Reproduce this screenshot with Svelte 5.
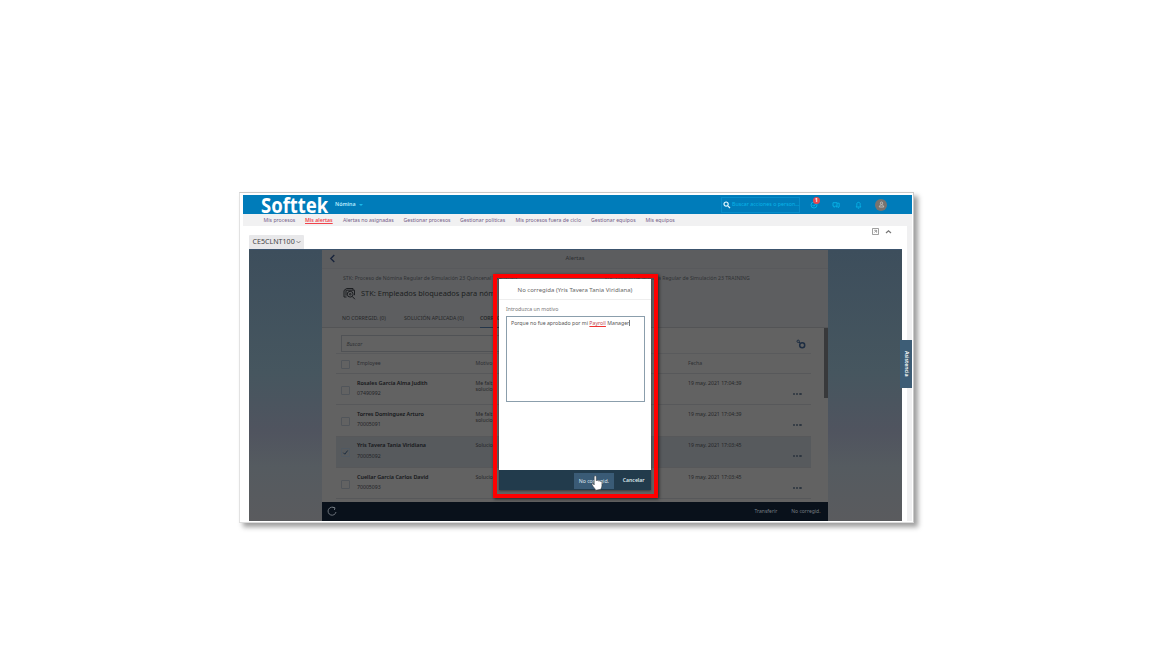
<script>
  const nav = [
    ['Mis procesos', 20.5, 31], ['Mis alertas', 62, 28], ['Alertas no asignadas', 100, 50], ['Gestionar procesos', 160.5, 47],
    ['Gestionar políticas', 217, 45], ['Mis procesos fuera de ciclo', 272.5, 66], ['Gestionar equipos', 348, 44], ['Mis equipos', 402.5, 29]
  ];
  const rows = [
    { name: 'Rosales García Alma Judith', id: '07490992', note: ['Me falt', 'solucio'], date: '19 may. 2021 17:04:39' },
    { name: 'Torres Dominguez Arturo', id: '70005091', note: ['Me falt', 'solucio'], date: '19 may. 2021 17:04:39' },
    { name: 'Yris Tavera Tania Viridiana', id: '70005092', note: ['Solucio'], date: '19 may. 2021 17:03:45', on: true },
    { name: 'Cuellar García Carlos David', id: '70005093', note: ['Solucio'], date: '19 may. 2021 17:03:45' }
  ];
</script>

<main>
  <div class="frame">
    <header>
      <span class="logo"><span>Softtek</span></span>
      <span class="module">Nómina <i class="caret"></i></span>
      <div class="find">
        <svg width="8" height="8" viewBox="0 0 8 8"><circle cx="3.1" cy="3.1" r="2.1" /><path d="M4.8 4.8 7 7" /></svg>
        <span>Buscar acciones o person...</span>
      </div>
      <div class="alert">
        <svg width="8" height="8" viewBox="0 0 8 8"><circle cx="4" cy="4" r="3" /><path d="M2.5 4 3.7 5.2 6 2.7" /></svg>
        <b>1</b>
      </div>
      <svg class="chat" width="8" height="8" viewBox="0 0 8 8"><path d="M1 1.7h4v3.5H3.3L2 6.3V5.2H1zM5.2 2.2h2v3.6h-.7v.7l-1-.7H4" /></svg>
      <svg class="bell" width="7" height="8" viewBox="0 0 7 8"><path d="M1 6c1-1 .8-2 .8-3 0-2.2 3.4-2.2 3.4 0 0 1-.2 2 .8 3zM2.8 7.2h1.4" /></svg>
      <div class="avatar"><svg width="7" height="7" viewBox="0 0 7 7"><circle cx="3.5" cy="2.2" r="1.2" /><path d="M1.3 6c0-3 4.4-3 4.4 0z" /></svg></div>
    </header>
    <nav>
      {#each nav as [label, x, w], i}
        <a class:current={i === 1} style:width="{(nav[i + 1] ? nav[i + 1][1] : x + w) - x}px"><span>{label}</span></a>
      {/each}
    </nav>
    <div class="body">
      <div class="work">
        <div class="tools">
          <div class="tab">CE5CLNT100 <svg width="5" height="4" viewBox="0 0 5 4"><path d="M.5 1 2.5 3 4.5 1" /></svg></div>
          <div class="actions">
            <svg width="7" height="7" viewBox="0 0 7 7"><path d="M.5.5h6v6h-6zM2.2 2.3h2.4v2.4M2.3 4.6l2-2" /></svg>
            <svg width="7" height="7" viewBox="0 0 7 7"><path class="thick" d="M1 5 3.5 2.7 6 5" /></svg>
          </div>
        </div>
        <div class="stage">
          <section class="panel">
            <div class="bar">
              <svg width="7" height="9" viewBox="0 0 7 9"><path d="M5.3 1 1.8 4.5 5.3 8" /></svg>
              <span>Alertas</span>
            </div>
            <div class="intro">
              <div class="crumbs"><span>STK: Proceso de Nómina Regular de Simulación 23 Quincenal TRAINING</span><span>STK: Equipo de Nómina Regular de Simulación 23 TRAINING</span></div>
              <div class="title">
                <svg width="13" height="13" viewBox="0 0 13 13"><path d="M3.5 10H1V3.5l2.5-2H10V3M3 3.2h8.5v5M3 3.2v5.5" /><circle cx="7.2" cy="7.2" r="2.9" /><circle cx="7.2" cy="7.2" r=".8" /><path d="m9.3 9.5 2.6 2.7" /></svg>
                <span>STK: Empleados bloqueados para nóm</span>
              </div>
              <div class="filters"><span>NO CORREGID. (0)</span><span>SOLUCIÓN APLICADA (0)</span><b>CORREG</b></div>
            </div>
            <div class="content">
              <div class="searchrow">
                <div class="search">Buscar</div>
                <svg width="10" height="10" viewBox="0 0 10 10"><circle cx="6.2" cy="6.2" r="2.5" /><circle class="small" cx="2.2" cy="2.3" r="1.2" /><path class="small" d="m3 3 1.3 1.3" /></svg>
              </div>
              <div class="row head"><i class="box"></i><span class="emp">Employee</span><span class="note">Motivo</span><span class="date">Fecha</span></div>
              {#each rows as r}
                <div class="row" class:on={r.on}>
                  <i class="box">{#if r.on}<svg width="7" height="7" viewBox="0 0 7 7"><path d="M1.3 3.7 2.8 5.2 5.7 1.5" /></svg>{/if}</i>
                  <div class="emp"><b>{r.name}</b><span>{r.id}</span></div>
                  <div class="note">{#each r.note as n}<span>{n}</span>{/each}</div>
                  <span class="date">{r.date}</span>
                  <span class="more"><i></i><i></i><i></i></span>
                </div>
              {/each}
              <div class="scroll"></div>
            </div>
            <footer>
              <svg width="10" height="10" viewBox="0 0 10 10"><path d="M7.5 2A4 4 0 1 0 9 6M5.7 1.2l2.3.6-.6 2.2" /></svg>
              <span class="transfer">Transferir</span><span>No corregid.</span>
            </footer>
          </section>
        </div>
      </div>
    </div>
    <div class="assist"><span>Asistencia</span></div>
    <div class="highlight">
      <div class="dialog">
        <h2>No corregida (Yris Tavera Tania Viridiana)</h2>
        <div class="form">
          <span class="label">Introduzca un motivo</span>
          <div class="area"><span>Porque no fue aprobado por mi <u>Payroll</u> Manager</span><i></i></div>
        </div>
        <div class="buttons"><span class="primary">No corregid.</span><span class="cancel">Cancelar</span></div>
      </div>
      <svg class="cursor" width="13" height="17" viewBox="0 0 13 17"><path d="M3.2 10V1.8c0-1.5 2.1-1.5 2.1 0V6c.2-1 1.8-.8 1.9.2.3-.8 1.8-.6 1.9.4.4-.6 1.8-.4 1.8.8v3.4c0 1.5-.7 2-1 3.5l-5.2.9c-.5-1.7-2-2.6-3.5-5.3-.9-1.6.9-1.9 2 .1z" /></svg>
    </div>
  </div>
</main>

<style>
  :global(body) { margin: 0; background: #fff; overflow: hidden; }
  * { box-sizing: border-box; }
  main { width: 1152px; height: 648px; padding: 192px 0 0 239px; font: 5.2px/7px "Noto Sans", sans-serif; white-space: nowrap; }
  svg { display: block; flex: none; fill: none; stroke: currentColor; stroke-width: .9; }
  .frame { position: relative; display: flex; flex-direction: column; width: 675px; height: 331px; padding: 2px 1px 1px 3px; border: 1px solid #c9c9c9; border-left-color: #e2e2e2; border-bottom-color: #ddd; background: #fff; box-shadow: 4px 4px 5px rgba(0,0,0,.38); }
  header { display: flex; align-items: center; height: 19px; flex: none; background: #007cba; color: #08b4e8; padding-left: 18px; }
  .logo { width: 74px; color: #fff; font: 700 20.5px/18px "Noto Sans", sans-serif; }
  .logo span { display: inline-block; transform: scaleX(.9); transform-origin: left; }
  .module { display: flex; align-items: center; width: 386px; color: #b5eaff; font-weight: 600; font-size: 5.3px; }
  .caret { margin-left: 3px; border: 2px solid transparent; border-top: 2px solid #19b9ea; border-bottom: 0; }
  .find { display: flex; align-items: center; gap: 1px; width: 79px; height: 16px; padding-left: 1px; border: 1px solid #078dca; }
  .find svg { color: #e0f7ff; stroke-width: 1.2; }
  .find span { font-size: 5.3px; }
  .alert { position: relative; margin-left: 10px; }
  .alert b { position: absolute; left: 3px; top: -4px; width: 7px; height: 7px; border-radius: 50%; background: #e9474e; color: #fff; text-align: center; font-size: 5px; line-height: 7px; }
  .chat { margin-left: 14px; }
  .bell { margin-left: 15px; }
  .avatar { display: flex; align-items: center; justify-content: center; width: 12px; height: 12px; margin-left: 13px; border-radius: 50%; background: #79736f; color: #c0bfbd; }
  nav { display: flex; height: 12px; flex: none; padding-left: 20.5px; background: #f1f1f2; color: #756087; line-height: 12px; }
  nav a { flex: none; }
  nav .current { color: #f0444c; font-weight: 600; }
  nav .current span { text-decoration: underline; text-underline-offset: 1px; }
  .body { display: flex; flex: 1; background: #f0f0f1; padding-right: 5.5px; }
  .work { flex: 1; display: flex; flex-direction: column; background: #fff; padding: 0 4.5px 0 5.5px; }
  .tools { display: flex; height: 23px; justify-content: space-between; align-items: flex-end; }
  .tab { display: flex; align-items: center; gap: 1.5px; width: 55px; height: 14px; padding: 0 0 1px 4px; background: #e8e8ea; border-radius: 1px 1px 0 0; font-size: 7.1px; color: #444; }
  .tab svg { stroke-width: .6; }
  .actions { display: flex; gap: 5.5px; padding: 0 10.5px 14px 0; color: #777; }
  .actions svg { stroke-width: .7; }
  .actions .thick { stroke-width: 1.2; }
  .stage { display: flex; height: 272px; padding-left: 73.5px; border-top: 1px solid #3c546d; background: linear-gradient(#3d4e5c, #46565f 45%, #50545f 67%, #555b60 80%, #5a5b5e); }
  .panel { display: flex; flex-direction: column; width: 505.5px; background: #626262; color: #252628; }
  .bar { display: flex; align-items: center; height: 18.5px; flex: none; padding-left: 7px; border-bottom: 1px solid #58595c; background: #5c5d5f; color: #17233b; }
  .bar svg { stroke-width: 1.3; }
  .bar span { margin-left: 229.5px; font-size: 5.8px; color: #2c2e31; }
  .intro { height: 59px; flex: none; padding: 6px 0 0 19px; background: #5d5e60; border-bottom: 1px solid #535456; }
  .crumbs { display: flex; padding-left: 2px; font-size: 5.2px; color: #303235; }
  .crumbs span:first-child { width: 261px; font-size: 5.2px; }
  .title { display: flex; align-items: center; gap: 5px; height: 13px; margin: 5px 0 0 2px; font-size: 7.45px; color: #1c1e21; }
  .title svg { stroke-width: 1; }
  .filters { display: flex; padding-top: 15px; font-size: 5.2px; padding-left: 1px; }
  .filters span { width: 62px; }
  .filters span + span { width: 76px; }
  .filters b { height: 13px; font-weight: 600; border-bottom: 1px solid #25364a; }
  .content { position: relative; flex: 1; padding: 8px 16.5px 0 13.5px; overflow: hidden; }
  .searchrow { display: flex; align-items: center; justify-content: space-between; height: 18px; padding: 0 5px 1px; border-bottom: 1px solid #595a5c; }
  .search { width: 300px; height: 17px; border: 1px solid #505255; padding: 0 5px; line-height: 16px; font-style: italic; color: #303235; }
  .searchrow svg { color: #1d2d42; stroke-width: 1.5; }
  .small { stroke-width: 1; }
  .row { display: flex; height: 31.35px; padding: 5.5px 0 0 5px; border-bottom: 1px solid #57585a; }
  .row.on { background: #575a5d; }
  .row .box { display: block; width: 9px; height: 9px; margin-top: 6px; border: 1px solid #51555a; border-radius: 1px; color: #14263a; }
  .row.on .box { border-color: #505962; }
  .row .emp { width: 118.5px; margin-left: 7.5px; }
  .row .note { width: 212.5px; }
  .emp b, .emp span, .note span { display: block; }
  .emp b { font-weight: 600; font-size: 5.45px; color: #141619; }
  .emp b + span { margin-top: 3.5px; color: #222427; }
  div.note span { height: 6px; }
  .date { width: 104.5px; font-size: 5.15px; }
  .more { display: flex; gap: .8px; margin-top: 13px; }
  .more i { width: 2.6px; height: 2px; border-radius: 50%; background: #2d3640; }
  .row.head { height: 20.5px; padding: 6px 0 0 5px; align-items: flex-start; color: #2d2f33; }
  .row.head .box { margin-top: 0; }
  .scroll { position: absolute; right: 0; top: 0; width: 4px; height: 70px; background: #38393b; }
  footer { display: flex; align-items: center; height: 19.5px; flex: none; padding: 0 7px 0 5px; background: #09111b; color: #767d85; font-size: 5px; }
  footer svg { margin-right: auto; }
  footer .transfer { margin-right: 14px; }
  .assist { position: absolute; right: 1px; top: 147px; width: 12px; height: 48px; display: flex; align-items: center; justify-content: center; background: #3d5d76; color: #fff; font-weight: 600; }
  .assist span { writing-mode: vertical-rl; }
  .highlight { position: absolute; left: 253px; top: 81px; width: 165px; height: 224px; padding: 2px; border: 4px solid #f00; box-shadow: 1px 1px 3px #222; }
  .dialog { display: flex; flex-direction: column; width: 152px; height: 211px; margin-top: -1px; background: #fff; color: #555; box-shadow: 0 1px 2px rgba(0,0,0,.4); }
  h2 { margin: 0; height: 21px; line-height: 22px; text-align: center; font-size: 6px; font-weight: 400; color: #666; border-bottom: 1px solid #eee; }
  .form { flex: 1; padding: 5px 7px 0; }
  .label { display: block; height: 10.5px; line-height: 9px; color: #777; }
  .area { display: flex; width: 138.5px; height: 86px; border: 1px solid #8b9eac; padding: 3.5px 4px; }
  .area u { color: #bd4a51; text-decoration-color: #e33; }
  .area i { width: 1px; height: 6px; background: #777; }
  .buttons { display: flex; align-items: center; height: 20px; justify-content: flex-end; background: #223b4c; color: #dfe8ee; padding: 1px 6.5px 0 0; }
  .primary { width: 40px; height: 16px; line-height: 16px; text-align: center; margin-right: 9px; background: #3a5b76; }
  .cancel { font-weight: 600; font-size: 5.1px; }
  .cursor { position: absolute; left: 93.5px; top: 197px; fill: #fff; stroke: #333; stroke-width: .5; }
</style>
